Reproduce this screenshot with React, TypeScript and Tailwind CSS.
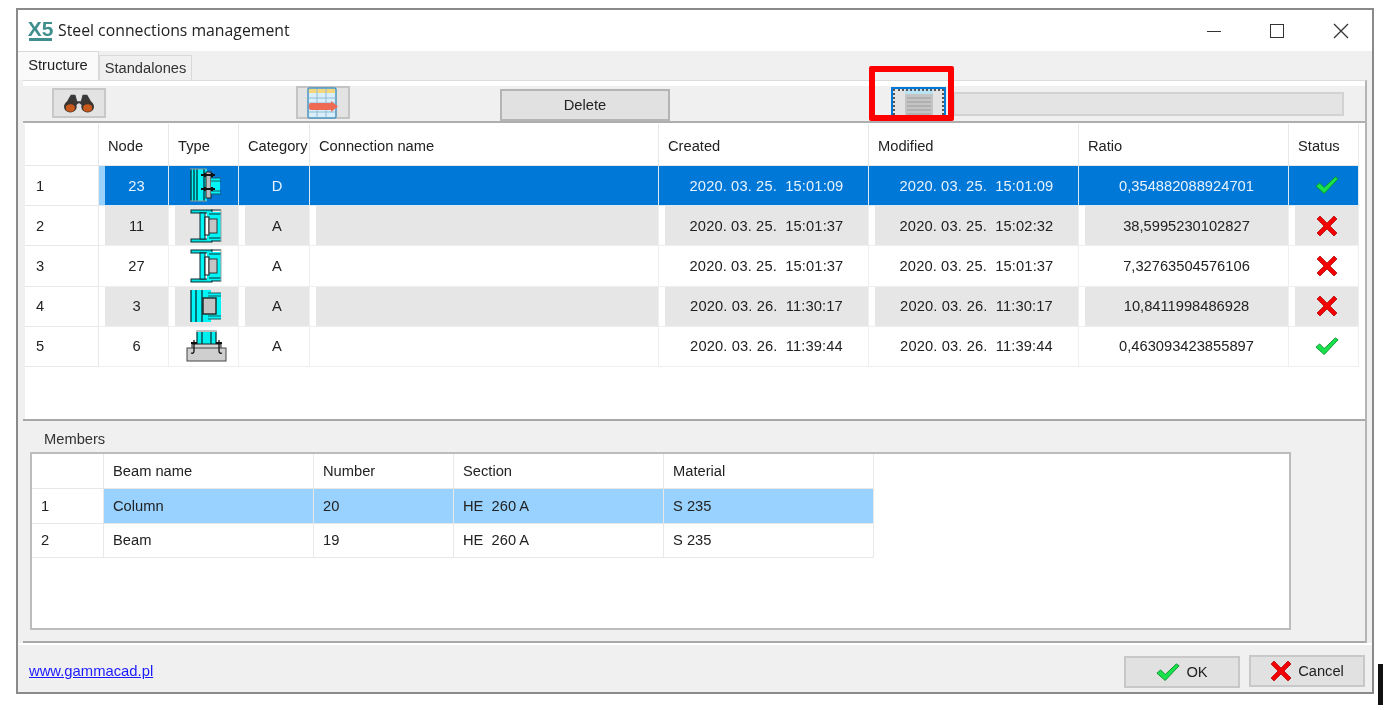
import { ReactNode } from "react";

const cols = "grid grid-cols-[74px_70px_70px_71px_349px_210px_210px_210px_70px]";
const memberCols = "grid grid-cols-[72px_210px_140px_210px_210px]";

function Check({ size = 24 }: { size?: number }) {
  return (
    <svg width={size} height={size * 0.77} viewBox="0 0 26 20">
      <path d="M1 11 L5 7.5 L10 12.5 L22 1 L25 3 L10 19 Z" fill="#17e24a" stroke="#0b8f30" strokeWidth="1" strokeLinejoin="round" />
    </svg>
  );
}

function Cross({ size = 22 }: { size?: number }) {
  return (
    <svg width={size} height={size} viewBox="0 0 22 22">
      <path d="M4 1 L11 8 L18 1 L21 4 L14 11 L21 18 L18 21 L11 14 L4 21 L1 18 L8 11 L1 4 Z" fill="#f40000" stroke="#b30c0c" strokeWidth="0.8" strokeLinejoin="round" />
    </svg>
  );
}

function ColumnIcon() {
  return (
    <svg width="33" height="35" viewBox="0 0 33 35">
      <rect x="1" y="1" width="16" height="32" fill="#00f6f6" />
      <path d="M1 1 V33 M4 1 V33 M7 1 V33 M14 1 V33" stroke="#063b45" strokeWidth="1.4" />
      <path d="M0 1 H17 M0 33 H17" stroke="#9a9a9a" />
      <rect x="16" y="4" width="5" height="26" fill="#bdbdbd" stroke="#222" strokeWidth="1" />
      <rect x="21" y="10" width="9" height="16" fill="#00f6f6" />
      <path d="M21 10 H31 M21 13 H31 M21 23 H31 M21 26 H31" stroke="#185a60" strokeWidth="1.2" />
      <path d="M11 7 H25 M11 21 H25 M15 5 V9 M22 5 V9 M15 19 V23 M22 19 V23" stroke="#111" strokeWidth="2" />
    </svg>
  );
}

function BeamIcon() {
  return (
    <svg width="33" height="34" viewBox="0 0 33 34">
      <rect x="1" y="1" width="21" height="3" fill="#00e4e4" stroke="#0b2b30" />
      <rect x="1" y="30" width="21" height="3" fill="#00e4e4" stroke="#0b2b30" />
      <rect x="10" y="4" width="5" height="26" fill="#00f6f6" stroke="#0b2b30" />
      <rect x="17" y="3" width="14" height="29" fill="#00f6f6" />
      <path d="M21 1 H31 M19 5 H31 M19 29 H31 M21 32 H31" stroke="#0b2b30" strokeWidth="1.2" />
      <rect x="15" y="8" width="4" height="18" fill="#fff" stroke="#111" />
      <rect x="19" y="10" width="8" height="14" fill="#c4c4c4" stroke="#333" />
      <path d="M31 1 V33" stroke="#a0a0a0" />
    </svg>
  );
}

function ColumnPlateIcon() {
  return (
    <svg width="33" height="34" viewBox="0 0 33 34">
      <rect x="1" y="1" width="20" height="32" fill="#00f6f6" />
      <path d="M1 1 V33 M6 1 V33 M12 1 V33" stroke="#063b45" strokeWidth="1.4" />
      <rect x="19" y="4" width="12" height="26" fill="#00f6f6" />
      <path d="M18 4 H31 M18 7 H31 M18 27 H31 M18 30 H31" stroke="#185a60" strokeWidth="1.2" />
      <rect x="13" y="9" width="13" height="16" fill="#c4c4c4" stroke="#222" strokeWidth="1.4" />
    </svg>
  );
}

function BaseIcon() {
  return (
    <svg width="42" height="32" viewBox="0 0 42 32">
      <rect x="11" y="2" width="19" height="13" fill="#00f0f0" />
      <path d="M11 2 V15 M16 2 V15 M25 2 V15 M30 2 V15" stroke="#0b3a40" strokeWidth="1.3" />
      <path d="M10 1 H31" stroke="#a8a8a8" strokeWidth="1.5" />
      <rect x="6" y="14" width="29" height="5" fill="#d4d4d4" stroke="#222" />
      <rect x="1" y="18" width="39" height="13" fill="#cfcfcf" stroke="#444" />
      <path d="M8 10 V21 Q8 24 5 23 M33 10 V21 Q33 24 36 23" stroke="#111" strokeWidth="1.3" fill="none" />
      <path d="M5 13 H11 M30 13 H36" stroke="#111" strokeWidth="2" />
    </svg>
  );
}

function Binoculars() {
  return (
    <svg width="34" height="20" viewBox="0 0 36 22">
      <path d="M9 2 L14 2 L16 9 L20 9 L22 2 L27 2 L34 14 L22 14 L18 11 L14 14 L2 14 Z" fill="#3a3a3a" />
      <ellipse cx="8.5" cy="15" rx="7" ry="6.5" fill="#3c342e" />
      <ellipse cx="27.5" cy="15" rx="7" ry="6.5" fill="#3c342e" />
      <ellipse cx="8.5" cy="16.5" rx="5" ry="4" fill="#c8591c" />
      <ellipse cx="27.5" cy="16.5" rx="5" ry="4" fill="#c8591c" />
    </svg>
  );
}

function TableArrow() {
  return (
    <svg width="33" height="32" viewBox="0 0 33 32">
      <rect x="1" y="1" width="28" height="30" rx="1.5" fill="#d9eefb" stroke="#4d93bd" strokeWidth="1.5" />
      <rect x="2" y="2" width="26" height="4" fill="#f5d67a" />
      <path d="M10 2 V30 M19 2 V30 M2 11 H28 M2 16 H28 M2 25 H28" stroke="#8fbcd6" strokeWidth="1" />
      <rect x="2" y="16" width="23" height="7" rx="2" fill="#ee6a52" />
      <path d="M24 14 L31 19.5 L24 25 Z" fill="#ee6a52" />
    </svg>
  );
}

function ListIcon() {
  return (
    <svg width="28" height="28" viewBox="0 0 28 28">
      <rect x="0" y="0" width="28" height="28" fill="#c4c4c4" />
      <rect x="0" y="0" width="28" height="5" fill="#b9e3f2" />
      <path d="M2 9 H26 M2 13 H26 M2 17 H26 M2 21 H26 M2 25 H26" stroke="#9c9c9c" strokeWidth="1.2" />
    </svg>
  );
}

type Row = {
  id: string;
  node: string;
  icon: ReactNode;
  cat: string;
  created: string;
  modified: string;
  ratio: string;
  ok: boolean;
};

const rows: Row[] = [
  { id: "1", node: "23", icon: <ColumnIcon />, cat: "D", created: "2020. 03. 25.  15:01:09", modified: "2020. 03. 25.  15:01:09", ratio: "0,354882088924701", ok: true },
  { id: "2", node: "11", icon: <BeamIcon />, cat: "A", created: "2020. 03. 25.  15:01:37", modified: "2020. 03. 25.  15:02:32", ratio: "38,5995230102827", ok: false },
  { id: "3", node: "27", icon: <BeamIcon />, cat: "A", created: "2020. 03. 25.  15:01:37", modified: "2020. 03. 25.  15:01:37", ratio: "7,32763504576106", ok: false },
  { id: "4", node: "3", icon: <ColumnPlateIcon />, cat: "A", created: "2020. 03. 26.  11:30:17", modified: "2020. 03. 26.  11:30:17", ratio: "10,8411998486928", ok: false },
  { id: "5", node: "6", icon: <BaseIcon />, cat: "A", created: "2020. 03. 26.  11:39:44", modified: "2020. 03. 26.  11:39:44", ratio: "0,463093423855897", ok: true },
];

function Cell({ row, first, children }: { row: number; first?: boolean; children?: ReactNode }) {
  // every cell keeps a 6px strip on the left: light blue/blue when selected, white otherwise
  if (row === 0) {
    return (
      <div className="flex h-full border-r border-b border-[#dfe9f2] bg-[#0078d7] text-[#e6f3ff]">
        <div className={`h-full w-[6px] shrink-0 ${first ? "bg-[#99d1ff]" : ""}`} />
        <div className="flex h-full min-w-0 flex-1 items-center justify-center overflow-hidden whitespace-pre">{children}</div>
      </div>
    );
  }
  const grey = row % 2 === 1 ? "bg-[#e6e6e6]" : "";
  return (
    <div className="h-full border-r border-b border-[#efefef] bg-white pl-[6px]">
      <div className={`flex h-full items-center justify-center overflow-hidden whitespace-pre ${grey}`}>{children}</div>
    </div>
  );
}

function HeaderCell({ children }: { children?: ReactNode }) {
  return <div className="flex h-full items-center border-r border-b border-[#e8e8e8] bg-white pl-[9px] pt-[3px]">{children}</div>;
}

function StructureGrid() {
  return (
    <div className="ml-[2px] h-[295px] w-[1340px] shrink-0 bg-white">
      <div className={`${cols} h-[42px]`}>
        <HeaderCell />
        <HeaderCell>Node</HeaderCell>
        <HeaderCell>Type</HeaderCell>
        <HeaderCell>Category</HeaderCell>
        <HeaderCell>Connection name</HeaderCell>
        <HeaderCell>Created</HeaderCell>
        <HeaderCell>Modified</HeaderCell>
        <HeaderCell>Ratio</HeaderCell>
        <HeaderCell>Status</HeaderCell>
      </div>
      {rows.map((r, i) => (
        <div key={r.id} className={`${cols} h-[40.2px]`}>
          <div className="flex h-full items-center border-r border-b border-[#e8e8e8] bg-white pl-[11px]">{r.id}</div>
          <Cell row={i} first>{r.node}</Cell>
          <Cell row={i}>{r.icon}</Cell>
          <Cell row={i}>{r.cat}</Cell>
          <Cell row={i} />
          <Cell row={i}><span className="tracking-[0.12px]">{r.created}</span></Cell>
          <Cell row={i}><span className="tracking-[0.12px]">{r.modified}</span></Cell>
          <Cell row={i}>{r.ratio}</Cell>
          <Cell row={i}>{r.ok ? <Check /> : <Cross />}</Cell>
        </div>
      ))}
    </div>
  );
}

function MembersGrid() {
  const members = [
    { id: "1", name: "Column", num: "20", section: "HE  260 A", mat: "S 235" },
    { id: "2", name: "Beam", num: "19", section: "HE  260 A", mat: "S 235" },
  ];
  return (
    <div className="ml-[7px] mt-[1px] h-[178px] w-[1261px] shrink-0 border-2 border-[#bcbcbc] bg-white">
      <div className={`${memberCols} h-[35px]`}>
        <div className="border-r border-b border-[#e8e8e8]" />
        {["Beam name", "Number", "Section", "Material"].map((h) => (
          <div key={h} className="flex items-center border-r border-b border-[#e8e8e8] pl-[9px]">{h}</div>
        ))}
      </div>
      {members.map((m, i) => (
        <div key={m.id} className={`${memberCols} h-[34.5px]`}>
          <div className="flex items-center border-r border-b border-[#e8e8e8] pl-[9px]">{m.id}</div>
          {[m.name, m.num, m.section, m.mat].map((v, j) => (
            <div key={j} className={`flex items-center whitespace-pre border-r border-b border-[#e8e8e8] pl-[9px] ${i === 0 ? "bg-[#99d1ff]" : "bg-white"}`}>{v}</div>
          ))}
        </div>
      ))}
    </div>
  );
}

export default function App() {
  return (
    <div className="relative h-[710px] w-[1384px] overflow-hidden bg-white pl-[16px] pt-[8px] font-['Liberation_Sans',sans-serif] text-[14.7px] text-[#222] blur-[0.35px]">
      <div className="flex h-[686px] w-[1358px] flex-col border-2 border-[#8a8a8a] bg-[#f0f0f0]">
        {/* Title bar */}
        <div className="flex h-[41px] shrink-0 items-center bg-white pl-[11px]">
          <span className="mr-[6px] flex h-[21px] w-[23px] items-start justify-center border-b-[3px] border-[#3f8f8f] text-[21px] font-bold leading-[17px] text-[#3f8f8f]">X5</span>
          <span className="font-['Open_Sans',sans-serif] text-[15.8px]">Steel connections management</span>
          <div className="ml-auto flex items-center gap-[49px] pr-[23px]">
            <div className="h-[1.5px] w-[14px] translate-y-[1px] bg-[#333]" />
            <div className="h-[14px] w-[14px] border-[1.5px] border-[#333]" />
            <svg width="16" height="16" viewBox="0 0 16 16">
              <path d="M1 1 L15 15 M15 1 L1 15" stroke="#333" strokeWidth="1.3" />
            </svg>
          </div>
        </div>

        {/* Tabs */}
        <div className="flex h-[29px] shrink-0 items-end">
          <div className="flex h-[29px] w-[81px] items-center justify-center border-t border-r border-[#d9d9d9] bg-[#fafafa] pb-[2px]">Structure</div>
          <div className="flex h-[25px] w-[93px] items-center justify-center border border-b-0 border-[#d9d9d9] text-[#333]">Standalones</div>
        </div>

        {/* Tab page */}
        <div className="ml-[5px] flex h-[563px] w-[1344px] shrink-0 flex-col border-r-2 border-t border-r-[#b4b4b4] border-t-[#dcdcdc]">
          <div className="h-[5px] shrink-0 bg-white" />
          <div className="flex h-[37px] shrink-0 items-start border-b-2 border-[#aeaeae] pl-[29px]">
            <button className="mt-[2px] flex h-[30px] w-[54px] items-center justify-center border-2 border-[#c8c8c8] bg-[#e3e3e3]">
              <Binoculars />
            </button>
            <button className="ml-[190px] flex h-[33px] w-[54px] items-center justify-center border-2 border-[#c4c4c4] bg-[#e3e3e3]">
              <TableArrow />
            </button>
            <button className="ml-[150px] mt-[3px] h-[32px] w-[170px] border-2 border-[#b4b4b4] bg-[#e1e1e1]">Delete</button>
            <button className="ml-[221px] mt-[1px] flex h-[34px] w-[55px] shrink-0 justify-center overflow-hidden border-2 border-b-0 border-[#0078d7] bg-[#e3e3e3] outline-dotted outline-2 -outline-offset-4 outline-[#555]">
              <ListIcon />
            </button>
            <div className="ml-[7px] mt-[6px] h-[24px] w-[391px] border-2 border-[#d2d2d2] bg-[#e4e4e4]" />
          </div>
          <div className="h-[1px] shrink-0 bg-white" />
          <StructureGrid />
          <div className="h-[2px] shrink-0 bg-[#a8a8a8]" />
          <div className="flex h-[30px] shrink-0 items-end pl-[21px] leading-[24px] text-[#333]">Members</div>
          <MembersGrid />
          <div className="mt-[11px] h-[2px] shrink-0 bg-[#a8a8a8]" />
        </div>

        {/* Footer */}
        <div className="flex flex-1 border-t-2 border-white">
          <a className="ml-[11px] mt-[16px] text-[14.8px] leading-[20px] text-[#1a1aff] underline">www.gammacad.pl</a>
          <div className="ml-auto flex items-start gap-[9px] pr-[7px] pt-[10px]">
            <button className="mt-[1px] flex h-[32px] w-[116px] items-center justify-center gap-[6px] border-2 border-[#c8c8c8] bg-[#e1e1e1]">
              <Check size={24} />
              OK
            </button>
            <button className="flex h-[32px] w-[116px] items-center justify-center gap-[6px] border-2 border-[#c8c8c8] bg-[#e1e1e1]">
              <Cross size={22} />
              Cancel
            </button>
          </div>
        </div>
      </div>

      {/* Annotation over the screenshot */}
      <div className="absolute left-[869px] top-[66px] h-[55px] w-[85px] rounded-[2px] border-[6px] border-[#ff0000]" />
      <div className="absolute left-[1378px] top-[664px] h-[41px] w-[5px] bg-[#111]" />
    </div>
  );
}
